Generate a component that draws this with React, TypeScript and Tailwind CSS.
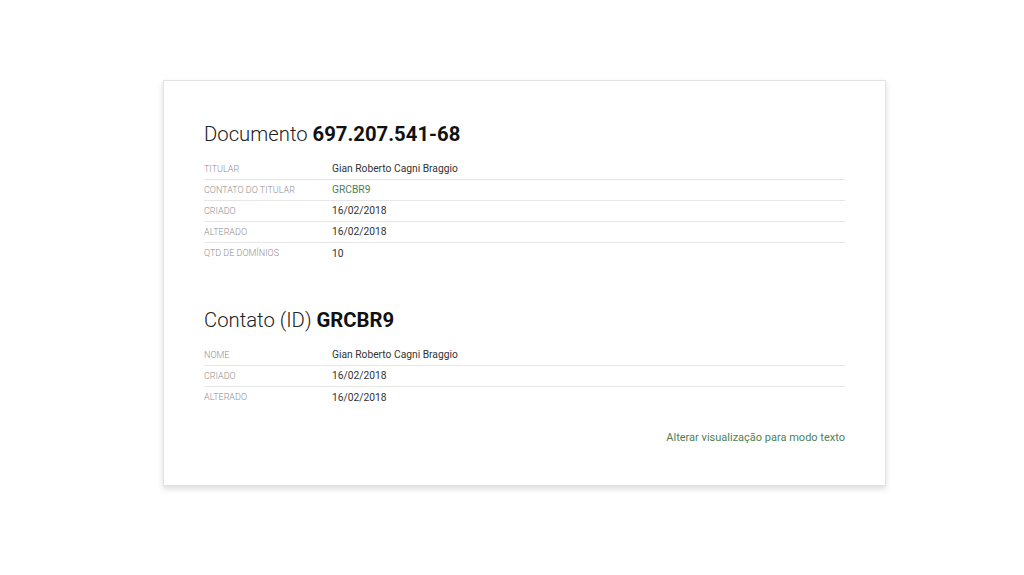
const documento = [
  { label: "Titular", value: "Gian Roberto Cagni Braggio" },
  { label: "Contato do titular", value: "GRCBR9", link: true },
  { label: "Criado", value: "16/02/2018" },
  { label: "Alterado", value: "16/02/2018" },
  { label: "QTD de domínios", value: "10" },
];

const contato = [
  { label: "Nome", value: "Gian Roberto Cagni Braggio" },
  { label: "Criado", value: "16/02/2018" },
  { label: "Alterado", value: "16/02/2018" },
];

type Row = { label: string; value: string; link?: boolean };

function Table({ rows }: { rows: Row[] }) {
  return (
    <div className="mt-[13px]">
      {rows.map((r, i) => (
        <div
          key={r.label}
          className={`flex h-[21px] items-center ${i < rows.length - 1 ? "border-b border-[#e6e6e6]" : ""}`}
        >
          <span className="mt-[1px] w-[128px] shrink-0 text-[9px] font-light uppercase text-[#8f8f8f]">{r.label}</span>
          <span className={`text-[10.25px] ${r.link ? "text-[#4f7f57]" : "text-[#333]"}`}>{r.value}</span>
        </div>
      ))}
    </div>
  );
}

export default function App() {
  return (
    <div className="h-[575px] w-[1024px] bg-white pt-[80px] font-['Roboto',sans-serif]">
      <div className="ml-[163px] h-[406px] w-[723px] border border-[#e2e2e2] bg-white px-[40px] pt-[41px] shadow-[0_3px_6px_rgba(0,0,0,0.14)]">
        <h1 className="text-[20.3px] leading-[24px] font-light text-[#222]">
          Documento <span className="font-bold text-[#111]">697.207.541-68</span>
        </h1>
        <Table rows={documento} />

        <h1 className="mt-[44px] text-[20.3px] leading-[24px] font-light text-[#222]">
          Contato (ID) <span className="font-bold text-[#111]">GRCBR9</span>
        </h1>
        <Table rows={contato} />

        <div className="mt-[16px] text-right">
          <a href="#" className="text-[11px] text-[#4f7f57]">
            Alterar visualização para modo texto
          </a>
        </div>
      </div>
    </div>
  );
}
